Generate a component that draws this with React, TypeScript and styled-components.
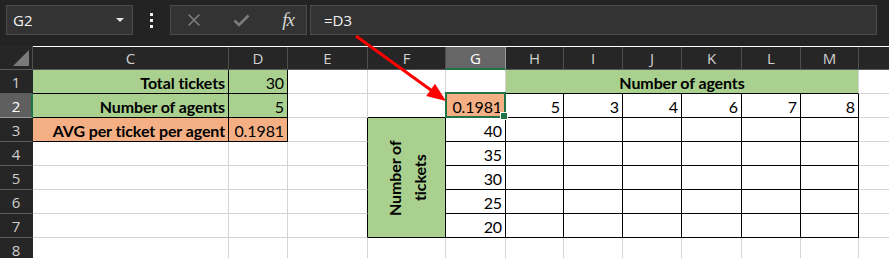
import styled, { createGlobalStyle } from 'styled-components'

const colors = {
    bar: '#232323',
    box: '#333333',
    boxBorder: '#4b4b4b',
    header: '#262626',
    headerText: '#cfcfcf',
    headerLine: '#4e4e4e',
    headerActive: '#666666',
    excelGreen: '#217346',
    grid: '#d4d4d4',
    green: '#a9d08e',
    orange: '#f4b084',
}

const GlobalStyle = createGlobalStyle`
    * { box-sizing: border-box; }
    html, body {
        margin: 0;
        padding: 0;
        background: #ffffff;
        overflow: hidden;
    }
    body {
        font-family: Lato, "Open Sans", sans-serif;
    }
`

const Page = styled.div`
    position: relative;
    width: 889px;
    height: 258px;
    overflow: hidden;
`

/* ---------- formula bar ---------- */

const FormulaBar = styled.div`
    height: 46px;
    background: ${colors.bar};
    display: flex;
    align-items: flex-start;
    padding: 5px 12px 0 6px;
`

const NameBox = styled.div`
    width: 127px;
    height: 30px;
    background: ${colors.box};
    border: 1px solid ${colors.boxBorder};
    display: flex;
    align-items: center;
    justify-content: space-between;
    padding: 0 8px 0 6px;
    color: #f2f2f2;
    font-family: "Open Sans", "Noto Sans", sans-serif;
    font-size: 15px;
`

const DropArrow = styled.span`
    width: 0;
    height: 0;
    border-left: 4px solid transparent;
    border-right: 4px solid transparent;
    border-top: 4px solid #e6e6e6;
`

const Dots = styled.div`
    width: 37px;
    height: 30px;
    display: flex;
    flex-direction: column;
    align-items: center;
    justify-content: center;
    gap: 3px;
    span {
        width: 3px;
        height: 3px;
        background: #f0f0f0;
    }
`

const Controls = styled.div`
    width: 137px;
    height: 30px;
    background: ${colors.box};
    border: 1px solid ${colors.boxBorder};
    display: flex;
    align-items: center;
    justify-content: space-between;
    padding: 0 12px 0 16px;
    margin-right: 3px;
`

const Fx = styled.span`
    font-family: "Liberation Serif", serif;
    font-style: italic;
    font-size: 19px;
    color: #d6d6d6;
    letter-spacing: -1px;
`

const FormulaInput = styled.div`
    flex: 1;
    height: 30px;
    background: ${colors.box};
    border: 1px solid ${colors.boxBorder};
    display: flex;
    align-items: center;
    padding-left: 13px;
    color: #f2f2f2;
    font-family: "Open Sans", "Noto Sans", sans-serif;
    font-size: 15px;
`

/* ---------- sheet grid ---------- */

const COLS = ['C', 'D', 'E', 'F', 'G', 'H', 'I', 'J', 'K', 'L', 'M', 'N']
const WIDTHS = [196, 59, 80, 78, 60, 58, 59, 59, 60, 59, 58, 90]
const ROWS = [1, 2, 3, 4, 5, 6, 7, 8]

const Sheet = styled.div`
    display: grid;
    grid-template-columns: 33px ${WIDTHS.map(w => `${w}px`).join(' ')};
    grid-auto-rows: 24px;
    background: #ffffff;
`

const Corner = styled.div`
    background: ${colors.header};
    border-right: 1px solid ${colors.headerLine};
    border-bottom: 1px solid #5a5a5a;
    display: flex;
    align-items: flex-end;
    justify-content: flex-end;
    padding: 0 3px 3px 0;
    &::after {
        content: '';
        width: 16px;
        height: 16px;
        background: #7a7a7a;
        clip-path: polygon(100% 0, 100% 100%, 0 100%);
    }
`

const ColHeader = styled.div<{ $active?: boolean }>`
    background: ${p => p.$active ? colors.headerActive : colors.header};
    color: ${p => p.$active ? '#ffffff' : colors.headerText};
    border-right: 1px solid ${p => p.$active ? '#9a9a9a' : colors.headerLine};
    border-bottom: ${p => p.$active ? `2px solid ${colors.excelGreen}` : '1px solid #5a5a5a'};
    display: flex;
    align-items: center;
    justify-content: center;
    font-family: "Open Sans", "Noto Sans", sans-serif;
    font-size: 15px;
    margin-top: 1px;
`

const RowHeader = styled.div<{ $active?: boolean }>`
    background: ${p => p.$active ? '#5f5f5f' : colors.header};
    color: ${p => p.$active ? '#ffffff' : colors.headerText};
    border-bottom: 1px solid ${p => p.$active ? '#9a9a9a' : '#5a5a5a'};
    border-right: ${p => p.$active ? `2px solid ${colors.excelGreen}` : `1px solid ${colors.header}`};
    display: flex;
    align-items: center;
    justify-content: center;
    padding-left: ${p => p.$active ? '1px' : '0'};
    font-family: "Open Sans", "Noto Sans", sans-serif;
    font-size: 15px;
`

type Fill = 'green' | 'orange'

const Cell = styled.div<{
    $fill?: Fill
    $bold?: boolean
    $align?: 'right' | 'center'
    $rightBlack: boolean
    $bottomBlack: boolean
    $colSpan: number
    $rowSpan: number
}>`
    position: relative;
    grid-column: span ${p => p.$colSpan};
    grid-row: span ${p => p.$rowSpan};
    display: flex;
    align-items: center;
    justify-content: ${p => p.$align === 'center' ? 'center' : 'flex-end'};
    padding: 1px 3px 0 3px;
    background: ${p => p.$fill ? colors[p.$fill] : '#ffffff'};
    border-right: 1px solid ${p => p.$rightBlack ? '#000000' : colors.grid};
    border-bottom: 1px solid ${p => p.$bottomBlack ? '#000000' : colors.grid};
    color: #000000;
    font-size: 16px;
    letter-spacing: -0.1px;
    font-weight: ${p => p.$bold ? 700 : 400};
    white-space: nowrap;
`

const VerticalText = styled.span`
    writing-mode: vertical-rl;
    transform: rotate(180deg);
    text-align: center;
    line-height: 25px;
    width: 100%;
    height: 100%;
    display: flex;
    flex-direction: column;
    justify-content: center;
    align-items: center;
`

const Selection = styled.div`
    position: absolute;
    top: -2px;
    left: -1px;
    right: -1px;
    bottom: -1px;
    border: 2px solid ${colors.excelGreen};
    z-index: 2;
    pointer-events: none;
    &::after {
        content: '';
        position: absolute;
        right: -4px;
        bottom: -4px;
        width: 6px;
        height: 6px;
        background: ${colors.excelGreen};
        border: 1px solid #ffffff;
    }
`

const Overlay = styled.svg`
    position: absolute;
    left: 0;
    top: 0;
    pointer-events: none;
    z-index: 5;
`

type Spec = {
    text?: string
    lines?: string[]
    fill?: Fill
    bold?: boolean
    align?: 'right' | 'center'
    colSpan?: number
    rowSpan?: number
    selected?: boolean
}

const content: Record<string, Spec> = {
    C1: { text: 'Total tickets', fill: 'green', bold: true },
    D1: { text: '30', fill: 'green' },
    C2: { text: 'Number of agents', fill: 'green', bold: true },
    D2: { text: '5', fill: 'green' },
    C3: { text: 'AVG per ticket per agent', fill: 'orange', bold: true },
    D3: { text: '0.1981', fill: 'orange' },
    H1: { text: 'Number of agents', fill: 'green', bold: true, align: 'center', colSpan: 6 },
    G2: { text: '0.1981', fill: 'orange', selected: true },
    H2: { text: '5' },
    I2: { text: '3' },
    J2: { text: '4' },
    K2: { text: '6' },
    L2: { text: '7' },
    M2: { text: '8' },
    F3: { lines: ['Number of', 'tickets'], fill: 'green', bold: true, rowSpan: 5 },
    G3: { text: '40' },
    G4: { text: '35' },
    G5: { text: '30' },
    G6: { text: '25' },
    G7: { text: '20' },
}

// cells with black borders: C1:D3, G2:M2, F3:M7
const boxed = (c: number, r: number) =>
    (c <= 1 && r >= 1 && r <= 3) ||
    (r === 2 && c >= 4 && c <= 10) ||
    (r >= 3 && r <= 7 && c >= 3 && c <= 10)

const covered = new Set<string>()
Object.entries(content).forEach(([key, spec]) => {
    const c = COLS.indexOf(key[0])
    const r = Number(key.slice(1))
    for (let i = 0; i < (spec.colSpan ?? 1); i++)
        for (let j = 0; j < (spec.rowSpan ?? 1); j++)
            if (i || j) covered.add(`${COLS[c + i]}${r + j}`)
})

const renderCell = (c: number, r: number) => {
    const key = `${COLS[c]}${r}`
    if (covered.has(key)) return null
    const spec = content[key] ?? {}
    const cs = spec.colSpan ?? 1
    const rs = spec.rowSpan ?? 1
    const lastC = c + cs - 1
    const lastR = r + rs - 1
    let right = false
    for (let j = r; j <= lastR; j++) if (boxed(lastC, j) || boxed(lastC + 1, j)) right = true
    let bottom = false
    for (let i = c; i <= lastC; i++) if (boxed(i, lastR) || boxed(i, lastR + 1)) bottom = true
    return (
        <Cell
            key={key}
            $fill={spec.fill}
            $bold={spec.bold}
            $align={spec.align}
            $rightBlack={right}
            $bottomBlack={bottom}
            $colSpan={cs}
            $rowSpan={rs}
        >
            {spec.lines
                ? <VerticalText>{spec.lines.map(l => <span key={l}>{l}</span>)}</VerticalText>
                : spec.text}
            {spec.selected && <Selection />}
        </Cell>
    )
}

const CrossIcon = () =>
    <svg width='14' height='14' viewBox='0 0 14 14'>
        <path d='M1.5 1.5 L12.5 12.5 M12.5 1.5 L1.5 12.5' stroke='#7c7c7c' strokeWidth='1.6' fill='none' />
    </svg>

const CheckIcon = () =>
    <svg width='17' height='13' viewBox='0 0 17 13'>
        <path d='M1.5 6.5 L6 11 L15.5 1.5' stroke='#7c7c7c' strokeWidth='2.6' fill='none' />
    </svg>

const Arrow = () => {
    const x1 = 356, y1 = 36, x2 = 446, y2 = 101
    const len = Math.hypot(x2 - x1, y2 - y1)
    const ux = (x2 - x1) / len, uy = (y2 - y1) / len
    const bx = x2 - ux * 19, by = y2 - uy * 19
    const px = -uy * 7.5, py = ux * 7.5
    return (
        <Overlay width='889' height='258'>
            <line x1={x1} y1={y1} x2={bx + ux * 2} y2={by + uy * 2} stroke='#ff0000' strokeWidth='3' />
            <polygon points={`${x2},${y2} ${bx + px},${by + py} ${bx - px},${by - py}`} fill='#ff0000' />
        </Overlay>
    )
}

const App = () =>
    <Page>
        <GlobalStyle />
        <FormulaBar>
            <NameBox>G2<DropArrow /></NameBox>
            <Dots><span /><span /><span /></Dots>
            <Controls>
                <CrossIcon />
                <CheckIcon />
                <Fx>fx</Fx>
            </Controls>
            <FormulaInput>=D3</FormulaInput>
        </FormulaBar>
        <Sheet>
            <Corner />
            {COLS.map(col => <ColHeader key={col} $active={col === 'G'}>{col === 'N' ? '' : col}</ColHeader>)}
            {ROWS.map(r => [
                <RowHeader key={`h${r}`} $active={r === 2}>{r}</RowHeader>,
                ...COLS.map((_, c) => renderCell(c, r)),
            ])}
        </Sheet>
        <Arrow />
    </Page>

export default App
